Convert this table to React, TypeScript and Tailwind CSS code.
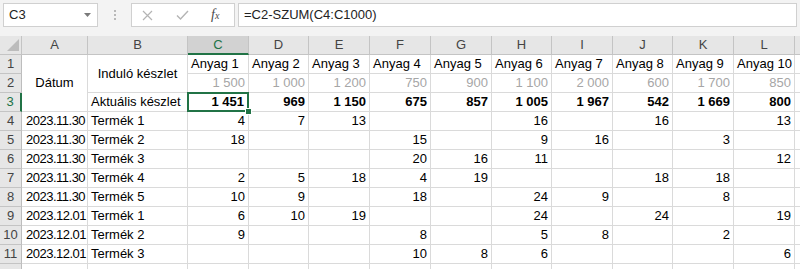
import React from 'react'
import clsx from 'clsx'

const letters = ['C', 'D', 'E', 'F', 'G', 'H', 'I', 'J', 'K', 'L']
const startStock = ['1 500', '1 000', '1 200', '750', '900', '1 100', '2 000', '600', '1 700', '850']
const currentStock = ['1 451', '969', '1 150', '675', '857', '1 005', '1 967', '542', '1 669', '800']

type Row = { date: string; name: string; vals: (number | null)[] }

const rows: Row[] = [
    { date: '2023.11.30', name: 'Termék 1', vals: [4, 7, 13, null, null, 16, null, 16, null, 13] },
    { date: '2023.11.30', name: 'Termék 2', vals: [18, null, null, 15, null, 9, 16, null, 3, null] },
    { date: '2023.11.30', name: 'Termék 3', vals: [null, null, null, 20, 16, 11, null, null, null, 12] },
    { date: '2023.11.30', name: 'Termék 4', vals: [2, 5, 18, 4, 19, null, null, 18, 18, null] },
    { date: '2023.11.30', name: 'Termék 5', vals: [10, 9, null, 18, null, 24, 9, null, 8, null] },
    { date: '2023.12.01', name: 'Termék 1', vals: [6, 10, 19, null, null, 24, null, 24, null, 19] },
    { date: '2023.12.01', name: 'Termék 2', vals: [9, null, null, 8, null, 5, 8, null, 2, null] },
    { date: '2023.12.01', name: 'Termék 3', vals: [null, null, null, 10, 8, 6, null, null, null, 6] },
]

const cell = 'border-r border-b border-[#dadada] overflow-hidden whitespace-nowrap leading-[18px]'
const head = 'bg-[#e6e6e6] border-r border-b border-[#c4c4c4] text-[#444] text-center leading-[18px]'

function RowHead({ n, active }: { n?: number; active?: boolean }) {
    return (
        <div
            className={clsx(
                'bg-[#e6e6e6] border-b border-[#c4c4c4] text-center leading-[18px]',
                active ? 'bg-[#d2d2d2] text-[#217346] border-r-2 border-r-[#217346]' : 'border-r border-r-[#bdbdbd] text-[#444]'
            )}
        >
            {n}
        </div>
    )
}

function FormulaBar() {
    return (
        <div className="h-[36px] bg-[#f3f3f3] flex items-start pt-[3px] pl-[3px] pr-[3px] gap-[3px]">
            <div className="w-[95px] h-[24px] bg-white border border-[#d0d0d0] flex items-center justify-between pl-[5px] pr-[6px]">
                <span className="text-[#222]">C3</span>
                <svg width="7" height="4" viewBox="0 0 7 4">
                    <polygon points="0,0 7,0 3.5,4" fill="#7a7a7a" />
                </svg>
            </div>
            <div className="w-[27px] h-[24px] flex flex-col items-center justify-center gap-[2px]">
                <span className="w-[2px] h-[2px] bg-[#b8b8b8]" />
                <span className="w-[2px] h-[2px] bg-[#b8b8b8]" />
                <span className="w-[2px] h-[2px] bg-[#b8b8b8]" />
            </div>
            <div className="w-[104px] h-[24px] bg-white border border-[#d0d0d0] flex items-center pl-[10px]">
                <svg width="11" height="11" viewBox="0 0 11 11" className="mr-[23px]">
                    <path d="M1 1 L10 10 M10 1 L1 10" stroke="#b4b4b4" strokeWidth="1.2" />
                </svg>
                <svg width="13" height="10" viewBox="0 0 13 10" className="mr-[22px]">
                    <path d="M1 5.5 L4.5 9 L12 1" stroke="#b4b4b4" strokeWidth="1.4" fill="none" />
                </svg>
                <span className="italic text-[#4a4a4a] text-[14px] font-['Liberation_Serif',serif] leading-none">
                    f<span className="text-[10px]">x</span>
                </span>
            </div>
            <div className="flex-1 h-[24px] bg-white border border-[#d0d0d0] pl-[5px] leading-[22px] text-[#222]">
                =C2-SZUM(C4:C1000)
            </div>
        </div>
    )
}

export default function App() {
    return (
        <div className="w-[800px] h-[269px] overflow-hidden bg-white text-[13px] text-black font-['Liberation_Sans',Arial,sans-serif]">
            <FormulaBar />
            <div className="grid grid-cols-[22px_66px_100px_61px_60px_61px_61px_61px_60px_61px_60px_61px_61px_20px] auto-rows-[19px]">
                {/* column headers */}
                <div className="bg-[#e6e6e6] border-r border-b border-[#c4c4c4] relative">
                    <svg width="12" height="12" viewBox="0 0 12 12" className="absolute right-[2px] bottom-[3px]">
                        <polygon points="12,0 12,12 0,12" fill="#bcbcbc" />
                    </svg>
                </div>
                <div className={head}>A</div>
                <div className={head}>B</div>
                {letters.map((l) =>
                    l === 'C' ? (
                        <div key={l} className="bg-[#d2d2d2] border-r border-[#c4c4c4] border-b-2 border-b-[#217346] text-[#217346] text-center leading-[18px]">
                            {l}
                        </div>
                    ) : (
                        <div key={l} className={head}>
                            {l}
                        </div>
                    )
                )}
                <div className={head} />

                {/* row 1 */}
                <RowHead n={1} />
                <div className={clsx(cell, 'row-span-3 flex items-center justify-center')}>Dátum</div>
                <div className={clsx(cell, 'row-span-2 flex items-center justify-center')}>Induló készlet</div>
                {letters.map((l, i) => (
                    <div key={l} className={clsx(cell, 'pl-[3px]')}>
                        Anyag {i + 1}
                    </div>
                ))}
                <div className={cell} />

                {/* row 2 */}
                <RowHead n={2} />
                {startStock.map((v, i) => (
                    <div key={i} className={clsx(cell, 'text-right pr-[3px] text-[#a6a6a6]')}>
                        {v}
                    </div>
                ))}
                <div className={cell} />

                {/* row 3 */}
                <RowHead n={3} active />
                <div className={clsx(cell, 'pl-[3px]')}>Aktuális készlet</div>
                {currentStock.map((v, i) =>
                    i === 0 ? (
                        <div key={i} className="relative border-r border-b border-[#dadada] whitespace-nowrap leading-[18px] text-right pr-[4px] font-bold">
                            {v}
                            <div className="absolute -left-px -top-px -right-px -bottom-px border-2 border-[#217346] z-10" />
                            <div className="absolute -right-[4px] -bottom-[4px] w-[7px] h-[7px] bg-[#217346] border border-white z-20" />
                        </div>
                    ) : (
                        <div key={i} className={clsx(cell, 'text-right pr-[3px] font-bold')}>
                            {v}
                        </div>
                    )
                )}
                <div className={cell} />

                {/* data rows */}
                {rows.map((r, ri) => (
                    <React.Fragment key={ri}>
                        <RowHead n={ri + 4} />
                        <div className={clsx(cell, 'pl-[4px] tracking-[-0.5px]')}>{r.date}</div>
                        <div className={clsx(cell, 'pl-[3px]')}>{r.name}</div>
                        {r.vals.map((v, i) => (
                            <div key={i} className={clsx(cell, 'text-right pr-[3px]')}>
                                {v ?? ''}
                            </div>
                        ))}
                        <div className={cell} />
                    </React.Fragment>
                ))}

                {/* row 12, only its top edge shows */}
                <RowHead />
                {Array.from({ length: 13 }).map((_, i) => (
                    <div key={i} className={cell} />
                ))}
            </div>
        </div>
    )
}
